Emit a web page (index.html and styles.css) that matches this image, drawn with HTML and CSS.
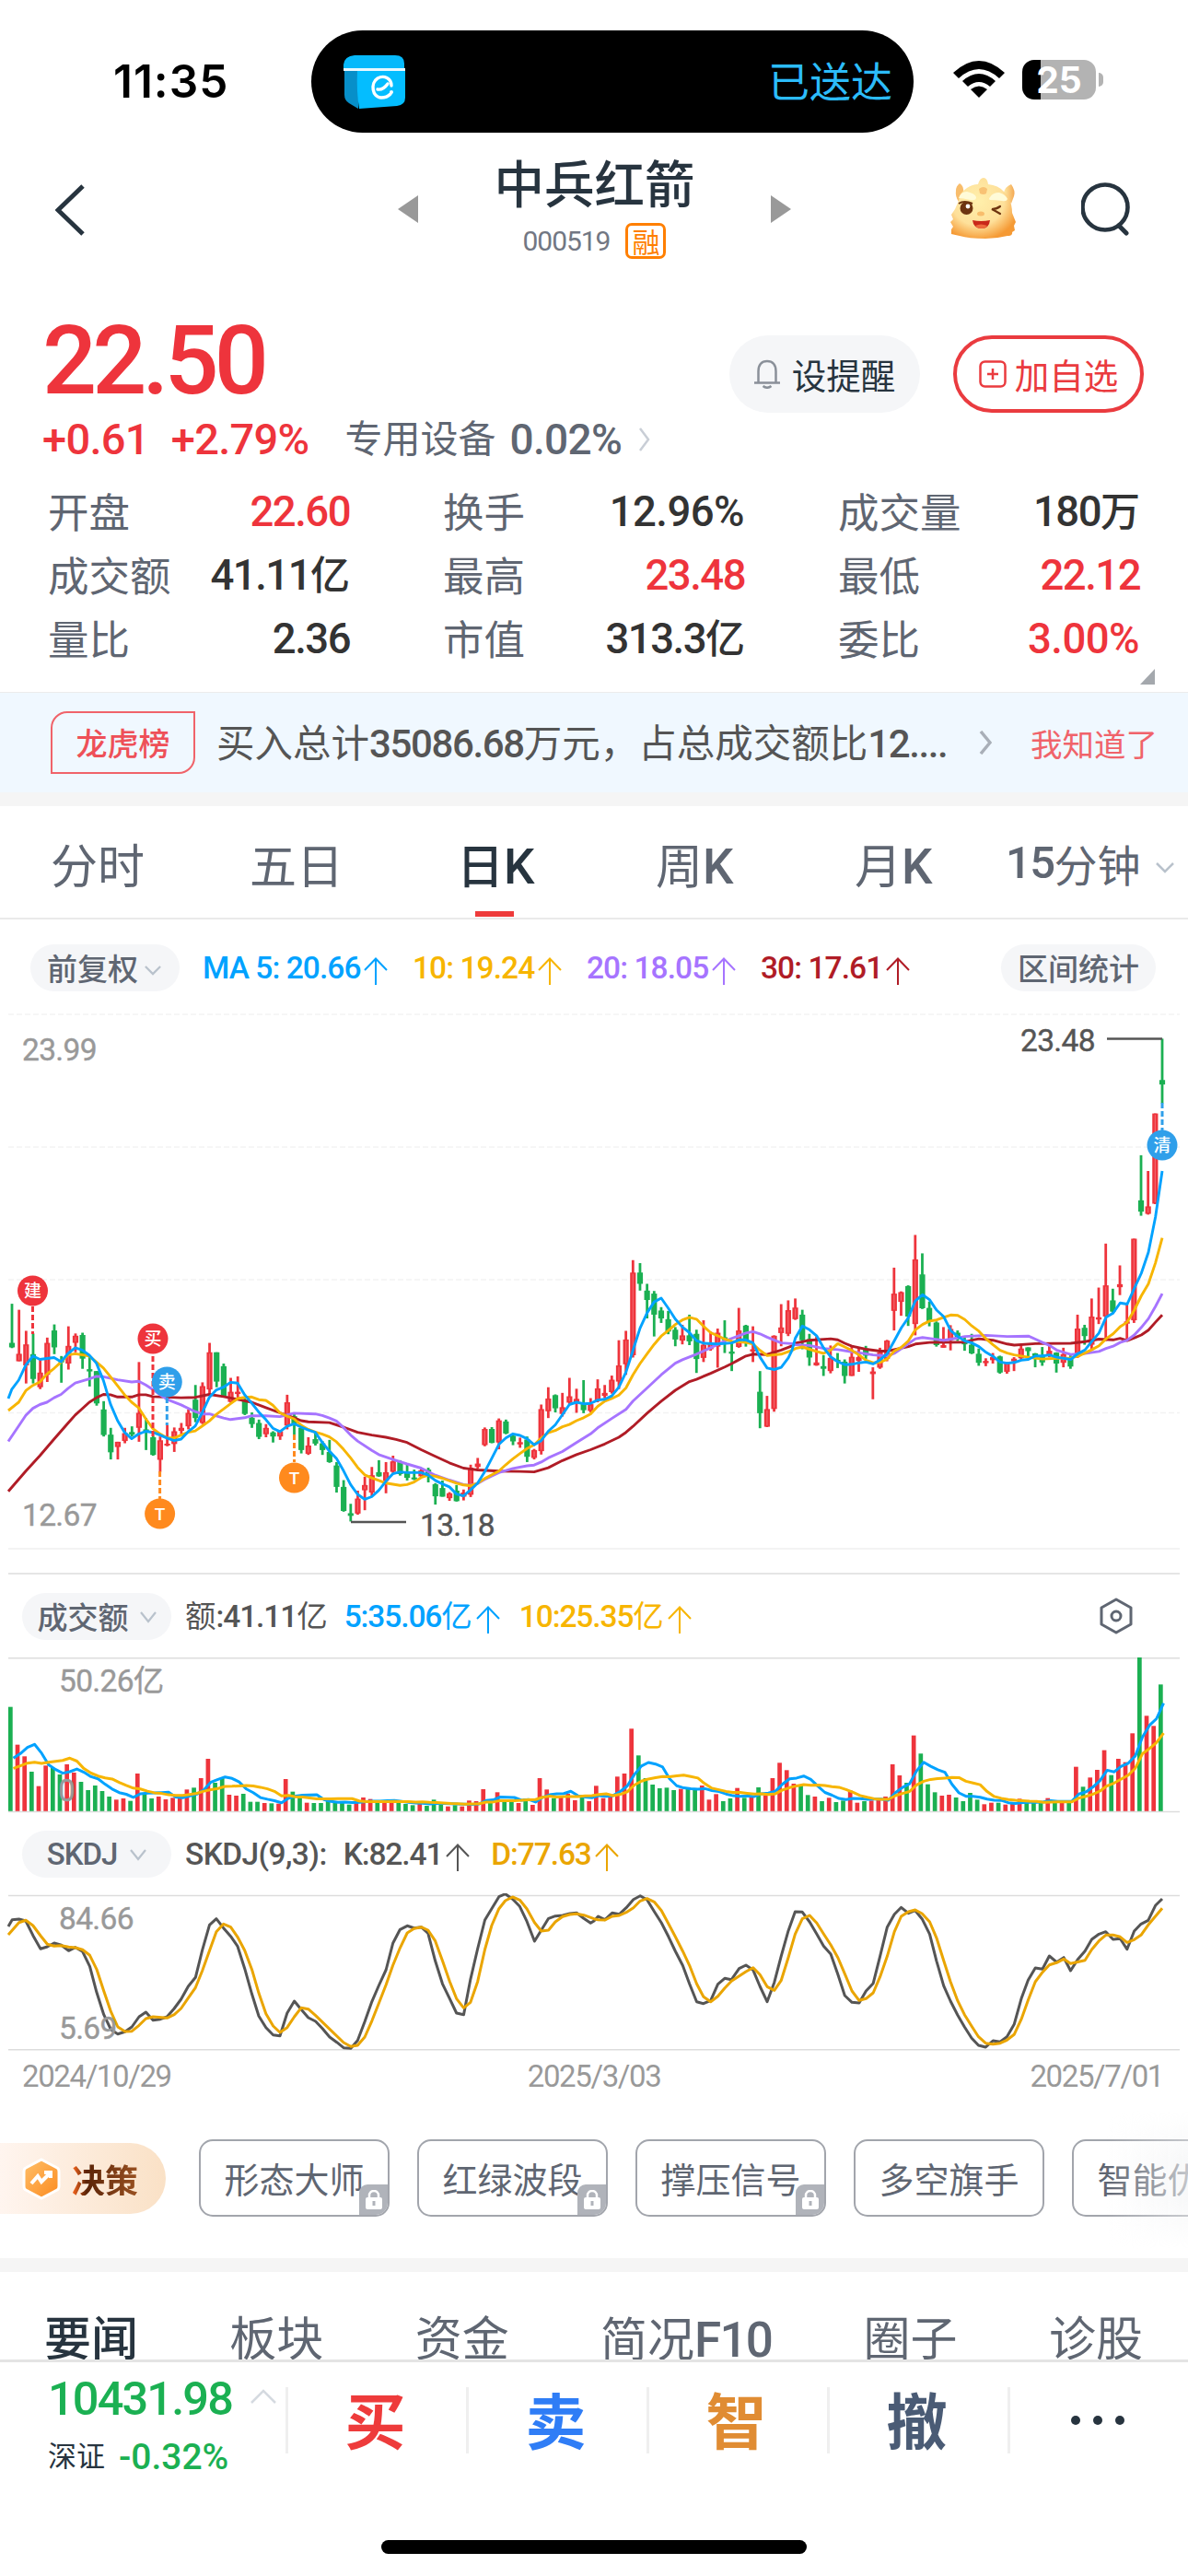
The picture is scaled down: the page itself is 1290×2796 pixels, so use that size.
FILE: index.html
```html
<!DOCTYPE html>
<html lang="zh-CN">
<head>
<meta charset="utf-8">
<title>中兵红箭 000519</title>
<link rel="stylesheet" href="styles.css">
</head>
<body>
<main class="phone">
  <header class="status">
    <span class="time">11:35</span>
    <div class="island">
      <svg class="wallet" width="68" height="58" viewBox="0 0 68 58">
        <path d="M12 0H56Q66 0 66 9V16H0V10Q1 1 12 0Z" fill="#06b9fb"/>
        <path d="M1 17L16 16V58L6 52Q1 49 1 43Z" fill="#078fc9"/>
        <path d="M15 16H67V46Q67 54 58 55L17 58Q14 40 15 16Z" fill="#04bdff"/>
        <path d="M0 14H67V17H0Z" fill="#e8f8ff"/>
        <path d="M52 33C52 25 44 21 37 25C29 30 31 46 41 46C45 46 48 45 51 42M37 37Q43 38 48 31" fill="none" stroke="#fff" stroke-width="3.400" stroke-linecap="round"/>
        <circle cx="52" cy="40" r="2" fill="#fff"/>
      </svg>
      <span class="sent">已送达</span>
    </div>
    <svg class="wifi" width="56" height="41" viewBox="0 0 56 41">
      <path d="M0 13Q28-13 56 13L50 19Q28-1 6 19Z"/>
      <path d="M10 22Q28 6 46 22L40 28Q28 18 16 28Z"/>
      <path d="M19 31Q28 24 37 31L28 40Z"/>
    </svg>
    <div class="battery"><span>25</span></div>
    <i class="battery-cap"></i>
  </header>

  <nav class="titlebar">
    <svg class="back" width="32" height="56" viewBox="0 0 32 56"><path d="M30 2L3 28L30 54" fill="none" stroke="#27343f" stroke-width="5"/></svg>
    <svg class="prev" width="22" height="30" viewBox="0 0 22 30"><path d="M22 0V30L0 15Z" fill="#999"/></svg>
    <div class="stock">
      <h1>中兵红箭</h1>
      <p><span class="n code">000519</span><span class="margin-tag">融</span></p>
    </div>
    <svg class="next" width="22" height="30" viewBox="0 0 22 30"><path d="M0 0V30L22 15Z" fill="#999"/></svg>
    <svg class="mascot" width="72" height="66" viewBox="0 0 72 66">
      <defs>
        <radialGradient id="face" cx=".42" cy=".38" r=".65"><stop offset="0" stop-color="#fff0ac"/><stop offset=".62" stop-color="#fee09a"/><stop offset="1" stop-color="#f59a35"/></radialGradient>
        <linearGradient id="horn" x2="1"><stop offset="0" stop-color="#ffeaa6"/><stop offset="1" stop-color="#f4a852"/></linearGradient>
      </defs>
      <path d="M10 6Q15 9 14 16L9 26Q5 20 6 14Q6 9 10 6Z" fill="#f8bd6c"/>
      <path d="M58 16Q59 10 66 7Q71 14 69 20L66 28Z" fill="url(#horn)"/>
      <path d="M9 25Q10 16 18 11Q24 7 30 7Q32 0 36 0Q40 0 41 7Q52 8 58 15Q64 20 66 29Q67 34 67 38L71 48L69 52L70 57L67 59Q68 63 62 63Q50 66 38 66Q20 66 10 63L1 61V56L3 53L0 48L3 45L1 40L5 34Z" fill="url(#face)"/>
      <path d="M31 12Q36 8 40 12L39 17Q36 19 32 17Z" fill="#f8c274"/>
      <path d="M9 22Q11 15 18 15Q27 17 28 21Q28 25 22 24Q13 22 9 22Z" fill="#fffbd8"/>
      <path d="M43 21Q46 16 53 16Q60 18 62 23Q61 26 56 25Q48 24 43 24Q41 23 43 21Z" fill="#fffbd8"/>
      <circle cx="17.500" cy="33" r="7" fill="#6d3410"/><path d="M9 28Q15 24 24 28" stroke="#6d3410" stroke-width="2" fill="none"/><circle cx="19" cy="31" r="2.400" fill="#fff"/>
      <path d="M54 31Q50 34 45 34Q49 36 54 39" fill="none" stroke="#6d3410" stroke-width="2.200" stroke-linecap="round"/>
      <ellipse cx="33" cy="39" rx="4" ry="2.500" fill="#f8bd6c"/>
      <path d="M24 46Q33 48 43 46Q42 55 34 55Q25 55 24 46Z" fill="#c9281a"/><path d="M27 52Q33 49 40 52Q38 55 34 55Q29 55 27 52Z" fill="#ee6a3c"/>
    </svg>
    <svg class="search" width="54" height="58" viewBox="0 0 54 58"><circle cx="26" cy="27" r="24.500" fill="none" stroke="#27343f" stroke-width="4.600"/><path d="M41 47L49 55" stroke="#27343f" stroke-width="5" stroke-linecap="round"/></svg>
  </nav>

  <section class="quote">
    <div class="quote-top">
      <div class="price n">22.50</div>
      <div class="actions">
        <button class="btn remind"><svg width="28" height="32" viewBox="0 0 28 32"><path d="M4.500 25V13C4.500 6 8 2 14 2S23.500 6 23.500 13V25M0 25.500H28M9.500 29Q14 32.500 18.500 29" fill="none" stroke="#8a9099" stroke-width="2.500"/></svg><span>设提醒</span></button>
        <button class="btn add"><svg width="30" height="30" viewBox="0 0 30 30"><rect x="1.500" y="1.500" width="27" height="27" rx="5" fill="none" stroke="#ea3b3f" stroke-width="2.500"/><path d="M15 9V21M9 15H21" stroke="#ea3b3f" stroke-width="2.500"/></svg><span>加自选</span></button>
      </div>
    </div>
    <div class="change">
      <b class="n">+0.61</b><b class="n pct">+2.79%</b>
      <span class="sector">专用设备</span><span class="n sector-pct">0.02%</span>
      <svg width="12" height="26" viewBox="0 0 12 26"><path d="M1 1L10 13L1 25" fill="none" stroke="#c9ced6" stroke-width="2.500"/></svg>
    </div>
    <dl class="stats">
      <div><dt>开盘</dt><dd class="up n">22.60</dd></div><div><dt>换手</dt><dd class="n wide">12.96%</dd></div><div><dt>成交量</dt><dd class="n">180<s>万</s></dd></div>
      <div><dt>成交额</dt><dd class="n">41.11<s>亿</s></dd></div><div><dt>最高</dt><dd class="up n">23.48</dd></div><div><dt>最低</dt><dd class="up n">22.12</dd></div>
      <div><dt>量比</dt><dd class="n">2.36</dd></div><div><dt>市值</dt><dd class="n">313.3<s>亿</s></dd></div><div><dt>委比</dt><dd class="up n wide">3.00%</dd></div>
    </dl>
    <i class="corner"></i>
  </section>

  <section class="notice">
    <span class="notice-tag">龙虎榜</span>
    <p>买入总计<span class="n">35086.68</span>万元，占总成交额比<span class="n">12....</span></p>
    <svg width="14" height="26" viewBox="0 0 14 26"><path d="M2 1L12 13L2 25" fill="none" stroke="#a9afb8" stroke-width="3.500"/></svg>
    <a>我知道了</a>
  </section>

  <nav class="periods">
    <span>分时</span><span class="five">五日</span><span class="on">日<em class="n">K</em></span><span>周<em class="n">K</em></span><span>月<em class="n">K</em></span>
    <span class="min"><em class="n">15</em>分钟<svg width="20" height="12" viewBox="0 0 20 12"><path d="M1 1L10 10L19 1" fill="none" stroke="#b9c2cc" stroke-width="2.500"/></svg></span>
  </nav>

  <div class="ma-row">
    <span class="pill adj">前复权<svg width="18" height="11" viewBox="0 0 20 12"><path d="M1 1L10 10L19 1" fill="none" stroke="#b9c2cc" stroke-width="2.500"/></svg></span>
    <span class="n ind m5">MA 5: 20.66<svg class="arr"><use href="#up"/></svg></span>
    <span class="n ind m10">10: 19.24<svg class="arr"><use href="#up"/></svg></span>
    <span class="n ind m20">20: 18.05<svg class="arr"><use href="#up"/></svg></span>
    <span class="n ind m30">30: 17.61<svg class="arr"><use href="#up"/></svg></span>
    <span class="pill range">区间统计</span>
  </div>

  <svg class="kline" id="kline" width="1290" height="629" viewBox="0 0 1290 629"></svg>

  <div class="sub-row vol-row">
    <span class="pill">成交额<svg width="18" height="13" viewBox="0 0 18 13"><path d="M1 1L9 11L17 1" fill="none" stroke="#b9c2cc" stroke-width="2.200"/></svg></span>
    <span class="n ind first"><s>额</s>:41.11<s>亿</s></span>
    <span class="n ind m5">5:35.06<s>亿</s><svg class="arr"><use href="#up"/></svg></span>
    <span class="n ind m10">10:25.35<s>亿</s><svg class="arr"><use href="#up"/></svg></span>
    <svg class="gear" width="38" height="40" viewBox="0 0 38 40"><path d="M19 2L35 11V29L19 38L3 29V11Z" fill="none" stroke="#5f6672" stroke-width="3" stroke-linejoin="round"/><circle cx="19" cy="20" r="5" fill="none" stroke="#5f6672" stroke-width="3"/></svg>
  </div>
  <svg class="volume" id="volume" width="1290" height="171" viewBox="0 0 1290 171"></svg>

  <div class="sub-row skdj-row">
    <span class="pill n">SKDJ<svg width="18" height="13" viewBox="0 0 18 13"><path d="M1 1L9 11L17 1" fill="none" stroke="#b9c2cc" stroke-width="2.200"/></svg></span>
    <span class="n ind first name">SKDJ(9,3):</span>
    <span class="n ind first">K:82.41<svg class="arr"><use href="#up"/></svg></span>
    <span class="n ind d">D:77.63<svg class="arr"><use href="#up"/></svg></span>
  </div>
  <svg class="skdj" id="skdj" width="1290" height="172" viewBox="0 0 1290 172"></svg>
  <div class="dates n"><span>2024/10/29</span><span class="mid">2025/3/03</span><span>2025/7/01</span></div>

  <section class="tools">
    <div class="decision">
      <svg width="42" height="46" viewBox="0 0 42 46"><defs><linearGradient id="hex" x2="1" y2="1"><stop offset="0" stop-color="#ffc06a"/><stop offset="1" stop-color="#fb8a1f"/></linearGradient></defs><path d="M21 2L38 11Q40 12 40 15V31Q40 34 38 35L21 44L4 35Q2 34 2 31V15Q2 12 4 11Z" fill="url(#hex)" stroke="#fff" stroke-width="3"/><path d="M10 28L17 20L21 26L31 16M24 16H31V22" fill="none" stroke="#fff" stroke-width="4"/></svg>
      <b>决策</b>
    </div>
    <div class="card">形态大师<i class="lock"><svg width="20" height="22" viewBox="0 0 20 22"><path d="M5 10V6A5 5 0 0 1 15 6V10" fill="none" stroke="#fff" stroke-width="2.500"/><rect x="1" y="8" width="18" height="13" rx="2" fill="#fff"/><path d="M10 12V17" stroke="#b0b3ba" stroke-width="3"/></svg></i></div>
    <div class="card">红绿波段<i class="lock"><svg width="20" height="22" viewBox="0 0 20 22"><path d="M5 10V6A5 5 0 0 1 15 6V10" fill="none" stroke="#fff" stroke-width="2.500"/><rect x="1" y="8" width="18" height="13" rx="2" fill="#fff"/><path d="M10 12V17" stroke="#b0b3ba" stroke-width="3"/></svg></i></div>
    <div class="card">撑压信号<i class="lock"><svg width="20" height="22" viewBox="0 0 20 22"><path d="M5 10V6A5 5 0 0 1 15 6V10" fill="none" stroke="#fff" stroke-width="2.500"/><rect x="1" y="8" width="18" height="13" rx="2" fill="#fff"/><path d="M10 12V17" stroke="#b0b3ba" stroke-width="3"/></svg></i></div>
    <div class="card">多空旗手</div>
    <div class="card">智能优选</div>
    <i class="fade"></i>
  </section>

  <nav class="topics"><span class="on">要闻</span><span>板块</span><span>资金</span><span>简况<em class="n">F10</em></span><span>圈子</span><span>诊股</span></nav>

  <footer class="trade">
    <div class="index">
      <div class="index-value"><span class="n">10431.98</span><svg width="28" height="16" viewBox="0 0 28 16"><path d="M1 15L14 2L27 15" fill="none" stroke="#d5dae0" stroke-width="2.500"/></svg></div>
      <div class="index-change"><span>深证</span><span class="n wide">-0.32%</span></div>
    </div>
    <div class="op buy">买</div><div class="op sell">卖</div><div class="op smart">智</div><div class="op cancel">撤</div>
    <div class="op more"><i></i><i></i><i></i></div>
  </footer>
  <i class="home"></i>
</main>
<svg width="0" height="0" class="defs"><symbol id="up" viewBox="0 0 26 30"><path d="M13 1V30M1 14L13 1.500L25 14" fill="none" stroke="currentColor" stroke-width="2"/></symbol></svg>
<script src="charts.js"></script>
</body>
</html>
```
FILE: styles.css
```css
* { box-sizing: border-box; }
body { margin: 0; background: #fff; font-family: Roboto, "Noto Sans CJK SC", sans-serif; color: #5f6672; }
h1, p, dl, dd { margin: 0; }
s { text-decoration: none; letter-spacing: 0; font-weight: 400; }
em, i { font-style: normal; }
svg { flex: none; }
.defs { position: absolute; }
.n { font-family: Roboto, "Noto Sans CJK SC", sans-serif; font-weight: 500; letter-spacing: -0.033em; }
.phone { width: 1290px; height: 2796px; overflow: hidden; display: flex; flex-direction: column; background: #fff; }
.phone > * { flex: none; }

.status { height: 144px; padding: 33px 0 0 123px; display: flex; align-items: center; color: #000; }
.time { width: 215px; font: 600 49.500px/1 Inter, sans-serif; letter-spacing: 1px; }
.island { width: 654px; height: 111px; border-radius: 56px; background: #000; display: flex; align-items: center; justify-content: space-between; padding: 0 23px 0 35px; }
.sent { font-size: 45px; line-height: 1; padding-top: 3px; color: #2cbcfa; }
.wifi { margin: 0 19px 4px 43px; }
.battery { width: 80px; height: 43px; border-radius: 13px; margin-bottom: 4px; background: linear-gradient(90deg, #000 0 20px, #b3b3b3 20px); color: #fff; font: 700 39px/43px Inter, sans-serif; text-align: center; }
.battery-cap { width: 5px; height: 15px; margin: 0 0 4px 3px; border-radius: 0 6px 6px 0; background: #b3b3b3; }

.titlebar { height: 172px; padding: 22px 62px 0 60px; display: flex; align-items: flex-start; }
.back { margin-top: 34px; }
.prev { margin: 46px 0 0 340px; }
.next { margin: 46px 0 0 0; }
.stock { width: 383px; text-align: center; }
.stock h1 { margin-top: -2px; font: 500 54.500px/66px "Noto Sans CJK SC", sans-serif; color: #27343f; }
.stock p { display: flex; justify-content: center; align-items: center; height: 40px; margin-top: 11px; }
.code { font-size: 30px; color: #727783; font-weight: 400; letter-spacing: -0.035em; }
.margin-tag { width: 44px; height: 39px; margin-left: 17px; border: 3px solid #ff7f00; border-radius: 7px; color: #ff7f00; font: 30px/33px "Noto Sans CJK SC", sans-serif; }
.mascot { margin: 27px 0 0 173px; }
.search { margin: 32px 0 0 auto; }

.quote { height: 435px; position: relative; }
.quote-top { height: 132px; padding: 26px 48px 0 46px; display: flex; align-items: center; justify-content: space-between; }
.price { font-size: 104px; line-height: 92px; margin-top: -6px; color: #ee343c; letter-spacing: -0.047em; }
.actions { display: flex; gap: 36px; margin-top: 21px; }
.btn { width: 207px; height: 84px; border-radius: 42px; border: 0; padding: 0; display: flex; justify-content: center; align-items: center; gap: 13px; font: 37.500px/1 "Noto Sans CJK SC", sans-serif; }
.remind { background: #f5f6f8; color: #27343f; }
.add { background: #fff; border: 4px solid #ea3b3f; color: #ea3b3f; gap: 9px; }
.change { height: 60px; padding: 0 0 3px 46px; display: flex; align-items: center; color: #ee343c; font-size: 47px; }
.change .n { letter-spacing: -0.015em; }
.change .pct { margin-left: 24px; }
.sector { margin-left: 39px; font-size: 41px; line-height: 50px; color: #5f6672; }
.sector-pct { margin-left: 15px; font-size: 46px; color: #5f6672; }
.change svg { margin-left: 19px; }
.stats { padding: 11px 54px 0 52px; display: grid; grid-template-columns: repeat(3, 327px); column-gap: 102px; grid-auto-rows: 69px; }
.stats div { display: flex; justify-content: space-between; align-items: center; }
.stats dt { font: 44.500px/60px "Noto Sans CJK SC", sans-serif; }
.stats dd { font-size: 45.500px; line-height: 60px; padding-top: 4px; margin-right: -1px; color: #333; white-space: nowrap; }
.stats .wide { letter-spacing: -0.012em; margin-right: 0; }
.stats s { font-size: 43px; font-weight: 500; }
.stats .up { color: #ee343c; }
.corner { position: absolute; right: 36px; bottom: 8px; width: 16px; height: 17px; background: #a4a8ad; clip-path: polygon(100% 0, 100% 100%, 0 100%); }

.notice { height: 124px; border-bottom: 15px solid #f5f5f5; border-top: 1px solid #ececec; background: #f0f8ff; display: flex; align-items: center; padding-left: 55px; color: #555; }
.notice-tag { width: 157px; height: 68px; border: 2px solid #f0636a; border-radius: 18px 0 18px 0; color: #ee5058; font: 500 34px/64px "Noto Sans CJK SC", sans-serif; text-align: center; }
.notice p { width: 792px; margin-left: 23px; padding-top: 3px; font-size: 41.500px; line-height: 60px; white-space: nowrap; }
.notice p .n { font-size: 42px; }
.notice svg { margin: 0 42px 0 36px; }
.notice a { font-size: 34.500px; color: #f0636a; white-space: nowrap; }

.periods { height: 123px; border-bottom: 2px solid #eaeaea; display: flex; align-items: center; font-size: 51px; padding: 2px 0 0 55px; }
.periods span { width: 216px; }
.periods .five { width: 225px; }
.periods .on { position: relative; color: #27343f; font-weight: 500; }
.periods .on::after { content: ""; position: absolute; left: 20px; top: 89px; width: 42px; height: 6px; background: #ee3b3b; }
.periods .min { width: auto; font-size: 47px; display: flex; align-items: center; white-space: nowrap; margin-left: -52px; }
.periods .min svg { margin: 10px 0 0 17px; }
.periods .n { font-size: 53px; }
.periods .min .n { font-size: 49px; }

.pill { height: 51px; border-radius: 26px; background: #f5f6f8; color: #5f6672; display: flex; align-items: center; justify-content: center; font: 500 33px/51px "Noto Sans CJK SC", sans-serif; }
.ind { display: flex; align-items: center; font-size: 33.500px; line-height: 40px; white-space: nowrap; }
.arr { width: 26px; height: 30px; margin: 6px 0 0 4px; }
.m5 { color: #00a2ff; } .m10 { color: #f7b500; } .m20 { color: #a674ff; } .m30 { color: #b01c26; }
.ma-row { height: 82px; padding: 22px 35px 0 33px; display: flex; align-items: center; }
.ma-row .pill svg { margin: 6px 0 0 7px; }
.ma-row .adj { width: 162px; margin-right: 25px; padding-right: 2px; }
.ma-row .m5 { width: 228px; } .ma-row .m10, .ma-row .m20 { width: 189px; }
.ma-row .n { letter-spacing: -0.028em; padding-top: 1px; }
.range { width: 168px; margin-left: auto; }
.kline, .volume, .skdj { display: block; }

.sub-row { height: 90px; padding: 0 59px 0 24px; display: flex; align-items: center; }
.sub-row .pill { width: 162px; margin-right: 15px; gap: 12px; }
.sub-row .pill svg { margin-top: 2px; }
.sub-row .first { color: #555; margin-right: 18px; }
.sub-row .m5 { margin-right: 21px; }
.sub-row .d { color: #eaa500; }
.vol-row .ind { padding-top: 2px; }
.gear { margin-left: auto; }
.skdj-row { height: 85px; }
.skdj-row .first { margin-right: 23px; }
.skdj-row .name { letter-spacing: -0.018em; margin-right: 18px; }
.skdj-row .pill.n { font-family: Roboto, sans-serif; font-size: 33px; gap: 14px; }
.dates { height: 59px; padding: 1px 27px 0 24px; display: flex; justify-content: space-between; font-size: 33px; line-height: 52px; color: #999; letter-spacing: -0.042em; font-weight: 400; }
.dates .mid { margin-right: 14px; }

.tools { height: 180px; border-bottom: 15px solid #f5f5f5; padding-top: 36px; display: flex; position: relative; overflow: hidden; }
.decision { width: 180px; height: 77px; margin: 4px 36px 0 0; flex: none; border-radius: 0 39px 39px 0; background: linear-gradient(90deg, #fff5ef, #fae1c6); display: flex; align-items: center; padding-left: 24px; gap: 12px; }
.decision b { font: 700 36px/1 "Noto Sans CJK SC", sans-serif; color: transparent; background: linear-gradient(90deg, #ff6a1f, #5b2408 22%, #9a5222); background-clip: text; }
.card { width: 207px; height: 84px; flex: none; margin-right: 30px; border: 2px solid #a2a5ac; border-radius: 15px; font: 38px/80px "Noto Sans CJK SC", sans-serif; text-align: center; position: relative; overflow: hidden; white-space: nowrap; }
.lock { position: absolute; right: 0; bottom: 0; width: 31px; height: 33px; background: #b0b3ba; border-radius: 9px 0 0 0; display: flex; align-items: center; justify-content: center; }
.fade { position: absolute; right: 0; top: 5px; width: 88px; height: 150px; background: linear-gradient(90deg, #fff0, #f4f5f6aa); -webkit-mask: linear-gradient(#0000, #000 35%, #000 65%, #0000); }

.topics { height: 95px; overflow: hidden; padding: 37px 49px 0 48px; display: flex; justify-content: space-between; font-size: 51px; line-height: 74px; white-space: nowrap; }
.topics .on { color: #27343f; font-weight: 500; }
.topics .n { font-size: 53px; }

.trade { height: 196px; border-top: 3px solid #e4e4e4; display: flex; background: #fff; }
.index { width: 310px; padding: 12px 0 0 52px; color: #1bb052; }
.index-value { display: flex; font-size: 50.500px; line-height: 56px; }
.index-value .n { width: 220px; letter-spacing: -0.037em; }
.index-value svg { margin-top: 17px; }
.index-change { display: flex; gap: 15px; margin-top: 7px; font-size: 39px; line-height: 56px; }
.index-change .wide { letter-spacing: 0; }
.index-change span:first-child { font-size: 31px; color: #27343f; }
.op { width: 196px; height: 72px; margin-top: 27px; padding: 0 4px 7px 0; border-left: 3px solid #efefef; display: flex; align-items: center; justify-content: center; font: 700 66px/72px "Noto Sans CJK SC", sans-serif; }
.buy { color: #ee3b3b; } .sell { color: #2f7df6; } .smart { color: #e08c33; } .cancel { color: #4a5b75; }
.more { gap: 14px; padding-bottom: 0; }
.more i { width: 10px; height: 10px; border-radius: 50%; background: #27343f; }
.home { width: 462px; height: 15px; border-radius: 8px; background: #000; margin: 0 auto; }

.axis { font: 400 33.500px Roboto, "Noto Sans CJK SC", sans-serif; letter-spacing: -0.02em; fill: #999; stroke: #999; stroke-width: .4px; }
.axis.dark { fill: #555; stroke: #555; }
.badge { font: 500 19px Roboto, "Noto Sans CJK SC", sans-serif; fill: #fff; text-anchor: middle; }
```
FILE: charts.js
```js
// Candles: direction, high, body top, body bottom, low (chart units, 2.45 per px)
const candles = `g821,925,937,939 r837,954,974,974 r893,929,985,1033 g900,955,1021,1033 r970,1004,1043,1048 r911,925,1010,1029 g876,892,937,955 g960,972,974,1031 r881,933,980,996 r900,906,925,950 g898,904,967,994 g960,995,1001,1041 g1000,1000,1086,1092 g1080,1102,1170,1174 g1151,1169,1216,1235 r1188,1188,1202,1235 r1151,1165,1186,1192 g1147,1162,1169,1174 r976,1111,1151,1188 g1125,1155,1160,1210 g1172,1176,1223,1225 r1174,1184,1236,1268 r1143,1193,1198,1200 r1150,1160,1194,1215 r1138,1151,1159,1168 r1102,1111,1147,1155 g1037,1076,1125,1136 r1030,1040,1138,1141 r925,950,1049,1060 g950,950,1028,1043 g980,987,1068,1070 r1018,1055,1082,1084 r1014,1055,1061,1075 g1072,1076,1114,1117 g1110,1124,1141,1151 g1129,1138,1175,1181 r1141,1151,1168,1176 g1160,1163,1174,1190 r1157,1160,1174,1183 r1063,1083,1145,1155 g1114,1120,1140,1170 g1147,1151,1210,1219 r1176,1198,1220,1223 g1166,1181,1193,1198 g1186,1192,1210,1223 g1183,1215,1242,1244 g1242,1251,1308,1323 g1290,1308,1372,1374 g1353,1378,1385,1400 r1318,1339,1379,1382 r1281,1303,1317,1370 r1255,1277,1323,1333 g1237,1269,1280,1281 r1242,1269,1292,1325 r1225,1240,1268,1271
g1237,1241,1274,1278 g1247,1270,1284,1291 g1262,1283,1288,1290 r1258,1264,1280,1283 g1257,1262,1272,1296 g1298,1301,1333,1355 g1291,1311,1334,1334 r1322,1325,1338,1345 g1303,1318,1346,1347 r1315,1323,1334,1344 r1249,1257,1329,1335 r1231,1246,1255,1260 r1150,1154,1197,1200 g1149,1154,1191,1192 r1126,1131,1190,1208 g1129,1134,1166,1168 g1166,1172,1187,1197 r1177,1189,1195,1204 g1174,1182,1228,1242 r1207,1210,1231,1235 r1089,1101,1213,1222 r1043,1073,1107,1125 g1062,1064,1099,1110 r1058,1096,1114,1121 r1018,1067,1084,1090 r1047,1074,1084,1111 g1024,1088,1104,1112 r1072,1088,1106,1110 r1022,1046,1078,1083 r1037,1058,1066,1072 r1012,1023,1056,1060 r918,985,1028,1048 r893,916,982,1010 r705,738,958,964 g713,738,768,786 g768,786,811,860 g787,794,850,908 g830,839,860,872 g840,862,895,902 g883,890,916,934 r877,905,919,929 g850,905,921,931 g890,901,968,1005 r865,930,965,976 r895,925,942,946 r887,898,935,991 g865,910,918,952 g925,948,954,1000 r832,892,936,938 g877,879,924,935 r881,942,948,976 g1000,1055,1112,1152 r1066,1101,1148,1149 r905,906,1101,1108 r822,884,899,934 r812,838,901,907
r807,831,862,864 g837,850,918,942 g901,915,964,986 r908,977,985,986 g958,987,994,1013 r932,965,1000,1006 g952,970,975,992 g969,975,1013,1033 r935,962,1013,1013 r940,963,973,1002 g933,940,959,968 r990,1001,1008,1075 r938,950,991,994 r917,919,968,974 r725,794,840,892 r788,790,816,853 g772,774,855,880 r638,703,875,905 g687,743,833,835 g815,832,868,881 g868,871,931,935 r883,931,938,938 r878,888,918,945 g892,898,915,920 g910,920,929,946 g901,930,953,955 g940,954,978,986 r966,973,979,987 r952,963,971,980 g959,961,1004,1007 r976,978,1002,1007 r963,967,974,1000 r930,940,966,970 g937,937,947,962 g952,953,968,990 g936,960,977,986 r928,946,956,963 g950,951,980,1004 r938,955,978,990 g958,963,988,994 r850,887,962,965 g877,885,907,930 r807,855,930,943 r778,857,863,875 r661,772,855,920 g781,812,842,848 r719,769,777,798 r820,868,874,918 r648,648,865,872 g426,546,576,587 r468,562,582,584 r315,315,555,556 g116,226,238,288`
  .split(/\s+/).map(c => [c[0], ...c.slice(1).split(',').map(Number)]);

// Moving averages: three panels of 1290 units each, x,y pairs
const averages = {
  '#b01c26': ['27,1320 84,1266 130,1225 176,1181 222,1138 245,1117 268,1100 291,1083 314,1071 337,1062 360,1063 383,1069 429,1069 452,1063 475,1063 498,1068 590,1071 636,1070 682,1062 728,1068 774,1075 820,1083 866,1097 912,1111 958,1124 981,1132 1004,1135 1073,1137 1119,1149 1165,1163 1211,1170 1257,1176 1290,1182',
    '36,1190 82,1209 128,1227 174,1244 220,1258 266,1263 335,1266 404,1267 450,1268 496,1257 542,1238 588,1222 634,1209 680,1194 726,1176 749,1163 772,1147 818,1112 864,1080 910,1051 956,1028 979,1022 1025,1006 1071,989 1094,980 1117,970 1140,960 1163,955 1209,956 1255,944 1290,933',
    '11,926 57,918 126,914 149,917 172,926 195,934 241,942 287,947 310,947 333,943 379,935 402,928 448,924 563,923 586,918 609,914 655,918 701,928 724,931 793,927 908,926 954,922 1000,915 1046,917 1069,913 1092,919 1115,912 1138,904 1161,891 1184,870 1206,851'],
  '#a674ff': ['27,1187 61,1146 84,1118 107,1099 130,1089 153,1083 176,1071 199,1062 222,1046 245,1032 291,1021 314,1014 337,1015 383,1023 429,1029 452,1027 475,1037 498,1049 521,1063 544,1075 590,1090 636,1108 659,1114 682,1114 728,1125 751,1129 797,1124 820,1119 866,1119 912,1121 958,1112 1027,1114 1050,1118 1073,1125 1096,1133 1119,1150 1142,1170 1165,1186 1211,1211 1234,1222 1280,1235',
    '36,1247 82,1258 128,1277 174,1290 220,1302 243,1304 266,1299 289,1288 335,1270 381,1259 427,1252 450,1250 473,1242 496,1231 542,1214 588,1190 634,1167 657,1151 703,1126 749,1102 772,1080 818,1045 864,1010 910,979 933,970 979,955 1025,938 1071,920 1117,906 1140,899 1163,895 1186,901 1209,910 1255,925 1290,927',
    '11,930 57,932 103,940 149,943 195,949 241,954 264,957 310,960 333,953 356,940 402,914 425,911 494,918 540,912 563,908 632,905 701,908 770,907 793,915 816,924 839,932 862,944 885,950 908,956 954,953 1000,948 1023,940 1046,934 1069,924 1092,918 1115,904 1138,884 1161,861 1184,828 1206,794'],
  '#f7b500': ['27,1105 61,1083 84,1052 107,1038 130,1029 153,1008 176,993 199,976 222,957 245,954 291,960 314,976 337,992 360,1015 383,1039 406,1063 429,1083 452,1098 475,1127 498,1153 521,1167 544,1178 567,1178 590,1170 613,1163 636,1159 659,1146 682,1133 705,1115 728,1101 751,1087 774,1073 797,1070 820,1069 843,1076 866,1078 889,1091 912,1111 935,1120 958,1127 981,1144 1004,1155 1027,1162 1050,1168 1073,1175 1096,1188 1119,1208 1142,1231 1165,1256 1188,1276 1211,1284 1234,1291 1257,1298 1280,1301',
    '13,1304 36,1302 59,1295 82,1283 105,1277 128,1280 151,1285 197,1298 220,1303 243,1305 266,1298 289,1286 312,1276 335,1266 358,1249 381,1233 404,1219 427,1206 450,1196 473,1178 496,1164 519,1158 542,1148 565,1142 588,1132 611,1124 634,1114 657,1094 680,1080 703,1073 726,1064 749,1045 772,1010 795,980 818,954 841,929 864,907 887,892 910,876 933,864 956,857 979,862 1002,881 1025,898 1048,906 1071,915 1094,921 1140,924 1163,928 1186,945 1209,959 1255,955 1290,945',
    '11,940 34,936 57,942 80,948 103,953 126,944 149,927 172,936 195,945 218,957 241,971 264,978 287,977 310,968 333,947 356,937 379,920 402,890 425,876 448,867 471,864 494,857 517,851 540,852 563,863 586,880 609,894 632,914 655,930 678,945 701,952 724,957 770,963 816,968 862,966 908,965 931,961 954,952 977,943 1000,933 1023,914 1046,901 1069,882 1092,870 1115,838 1138,800 1161,768 1184,712 1206,646'],
  '#00a2ff': ['27,1073 38,1049 61,1024 84,984 107,960 130,969 176,964 199,975 222,953 245,938 268,944 291,958 314,979 337,1025 360,1088 383,1132 406,1163 429,1180 452,1167 475,1160 498,1163 521,1170 544,1178 567,1185 590,1181 613,1161 636,1146 659,1110 682,1070 705,1050 728,1043 751,1030 774,1032 797,1063 820,1085 843,1109 866,1129 889,1152 912,1161 935,1147 958,1140 981,1149 1004,1157 1027,1163 1050,1190 1073,1213 1096,1232 1119,1265 1142,1302 1165,1328 1188,1341 1211,1334 1234,1317 1257,1293 1280,1273',
    '13,1268 36,1270 82,1270 105,1277 128,1291 151,1300 174,1308 197,1327 220,1332 243,1316 266,1298 289,1268 312,1232 335,1195 358,1178 381,1167 404,1171 427,1180 450,1196 473,1185 496,1160 519,1143 542,1116 565,1089 588,1083 611,1087 634,1086 657,1077 680,1075 703,1066 726,1043 749,1003 772,945 795,886 818,845 841,816 864,806 887,833 910,862 933,883 956,898 979,919 1002,926 1048,928 1094,925 1117,917 1140,917 1163,925 1186,963 1209,992 1232,996 1255,990 1278,965 1290,945',
    '11,912 34,880 57,890 80,906 103,938 126,962 149,975 172,983 195,982 218,978 241,976 264,981 287,970 310,954 333,920 356,885 379,858 402,813 425,797 448,810 471,838 494,855 517,892 540,908 563,920 586,925 609,935 632,950 655,961 678,976 701,979 724,977 747,971 770,969 793,960 816,960 839,957 862,963 908,969 931,954 954,944 977,921 1000,899 1023,857 1046,846 1069,819 1092,822 1115,780 1138,740 1161,684 1184,590 1206,468']
};

const color = { r: '#ee343c', g: '#1bb052' };
const step = 1249 / 163;
const line = (pts, c, w) => `<polyline points="${pts}" fill="none" stroke="${c}" stroke-width="${w}" stroke-linejoin="round"/>`;
const rule = (y, c, w, dash = '') => `<path d="M9 ${y}H1281" stroke="${c}" stroke-width="${w}" stroke-dasharray="${dash}"/>`;
const panels = (parts, width, sx, sy, dy) => parts.map((p, i) => p.split(' ').map(q => {
  const [x, y] = q.split(',').map(Number);
  return ((x + i * width) / sx).toFixed(1) + ',' + (y / sy - dy).toFixed(1);
}).join(' ')).join(' ');

// Price chart
let k = [21, 165, 309, 453.5].map(y => rule(y, '#f3f3f3', 1.5, '6 3')).join('') + rule(601, '#f3f3f3', 2);
candles.forEach(([d, h, t, b, l], i) => {
  const x = 13 + i * step, Y = v => v / 2.45;
  k += `<path d="M${x} ${Y(h)}V${Y(l)}" stroke="${color[d]}" stroke-width="2.8"/><rect x="${x - 3.1}" y="${Y(t)}" width="6.2" height="${Math.max(2, Y(b - t))}" fill="${color[d]}"/>`;
  if (d === 'r' && b - t > 12) k += `<rect x="${x - 0.6}" y="${Y(t) + 1.5}" width="1.2" height="${Y(b - t) - 3}" fill="#f3656c"/>`;
});
for (const c in averages) k += line(panels(averages[c], 1290, 3, 2.45, 0), c, 2.9);
const mark = (x, y, from, to, c, s) => `<path d="M${x} ${from}V${to}" stroke="${c}" stroke-width="3" stroke-dasharray="6 3"/><circle cx="${x}" cy="${y}" r="16.500" fill="${c}"/><text class="badge" x="${x}" y="${y + 7}">${s}</text>`;
k += mark(35.5, 321, 338, 368, '#ee343c', '建') + mark(166, 373, 392, 480, '#ee343c', '买') + mark(181.3, 420, 437, 467, '#2f9fea', '卖')
  + mark(173.6, 563, 517, 547, '#ff8a1e', 'T') + mark(319.5, 524, 477, 507, '#ff8a1e', 'T') + mark(1262, 163, 117, 147, '#2f9fea', '清');
k += `<path d="M1202 47.500H1262M381 572H441" stroke="#555" stroke-width="2.4"/>
<text class="axis" x="24" y="71">23.99</text><text class="axis" x="24" y="576">12.67</text>
<text class="axis dark" x="1108" y="61">23.48</text><text class="axis dark" x="456" y="587">13.18</text>`;
k += rule(628, '#ddd', 1.6);
document.getElementById('kline').innerHTML = k;

// Turnover bars (3 units per px) with 5 and 10 day averages
const vol = [488,611,649,699,746,679,687,708,675,702,732,759,744,762,780,790,786,794,705,770,786,780,789,784,780,757,751,720,657,735,718,774,777,771,797,797,801,802,803,723,764,784,800,801,801,794,797,798,806,800,783,788,797,798,798,797,804,808,802,810,790,802,812,808,812,793,795,756,798,766,797,798,801,786,807,720,757,785,781,771,792,780,795,
745,785,778,715,705,559,646,720,741,753,751,759,755,756,757,744,790,772,795,786,752,784,782,750,776,720,670,694,738,744,775,780,795,784,798,793,760,800,795,793,792,780,675,711,735,581,640,740,766,777,774,783,795,768,790,805,800,800,806,803,787,797,800,800,785,797,798,797,683,748,718,693,629,710,657,668,574,324,517,550,415];
const VY = v => v / 3 - 109;
let v = rule(0.8, '#ddd', 1.6);
vol.forEach((t, i) => { v += `<rect x="${9 + i * step}" y="${VY(t)}" width="4.700" height="${167 - VY(t)}" fill="${color[candles[i][0]]}"/>`; });
const mean = (n, lead) => vol.map((_, i) => {
  const m = i < lead.length ? lead[i] : vol.slice(i - n + 1, i + 1).reduce((a, b) => a + b) / n;
  return (14.5 + i * step).toFixed(1) + ',' + VY(m).toFixed(1);
}).join(' ');
v += line(mean(5, [655, 640, 620, 610]), '#00a2ff', 3) + line(mean(10, [688, 680, 671, 668, 672, 668, 665, 662, 655]), '#f7b500', 3);
v += rule(167.5, '#ddd', 1.6) + '<text class="axis" x="64" y="37">50.26亿</text><text class="axis" x="63" y="156">0</text>';
document.getElementById('volume').innerHTML = v;

// SKDJ oscillator
const K = ['22,333 32,311 50,309 68,315 87,362 107,406 125,399 143,387 162,394 181,412 199,401 218,415 237,463 255,547 274,620 293,669 311,683 330,676 348,660 367,627 385,612 404,638 423,635 441,627 460,600 478,570 497,528 516,499 534,410 553,328 571,308 590,338 609,365 627,397 646,470 665,553 683,625 702,662 721,686 739,689 758,615 777,576 795,603 814,630 833,642 851,665 870,693 889,710 907,728 926,730 944,704 963,643 982,577 1000,525 1019,474 1037,388 1056,343 1075,331 1093,338 1112,335 1130,355 1149,445 1168,520 1187,568 1205,615 1224,620 1242,505 1261,405 1280,312 1298,275 1317,236 1334,227 1353,244 1372,268 1391,317 1411,381 1429,345 1448,307 1466,299 1485,297 1504,291 1522,289 1541,307 1559,322 1568,315',
  '11,300 29,311 48,289 67,293 85,272 104,245 122,233 140,246 159,284 178,321 197,367 215,414 234,460 252,520 271,578 289,584 308,574 327,521 345,502 363,506 383,470 401,459 420,475 438,528 457,578 476,515 494,430 513,347 531,285 550,286 569,318 588,358 606,397 625,423 644,490 662,558 681,580 700,582 718,543 737,518 755,430 774,335 793,293 811,271 830,290 848,281 866,308 886,358 904,445 923,526 941,576 960,622 978,660 997,697 1015,720 1034,726 1053,705 1072,709 1090,692 1109,652 1128,568 1146,508 1165,468 1184,472 1202,429 1221,449 1240,434 1258,477 1277,440 1296,413 1314,375 1333,358 1351,350 1370,375 1389,373 1407,407 1426,348 1444,325 1463,313 1482,265 1500,243'];
const D = ['22,360 50,320 68,313 87,330 107,363 125,391 143,397 162,395 181,400 199,402 218,409 237,427 255,472 274,543 293,611 311,660 330,675 348,674 367,655 385,633 404,627 441,631 460,620 478,600 497,566 516,532 534,477 553,412 571,350 590,325 609,335 627,367 646,411 665,473 683,550 702,617 721,657 739,678 758,662 777,627 795,598 814,602 833,623 870,667 907,711 926,724 944,720 963,693 982,640 1000,583 1019,523 1037,460 1056,403 1075,354 1093,340 1112,335 1130,345 1149,380 1168,445 1187,512 1205,568 1224,598 1242,580 1261,512 1280,408 1298,330 1317,275 1334,249 1353,237 1372,247 1391,276 1411,320 1429,348 1448,345 1466,318 1485,301 1504,294 1522,292 1541,296 1568,308',
  '11,311 29,312 48,300 67,297 85,287 104,272 122,250 140,242 159,253 178,281 197,325 215,367 234,413 252,460 271,520 289,562 308,578 327,560 345,534 363,511 401,480 420,467 438,490 457,529 476,541 494,509 513,434 531,358 550,308 569,297 588,322 606,357 625,393 644,435 662,487 681,543 700,574 718,568 737,549 755,497 774,430 793,350 811,300 830,285 848,279 866,291 886,318 904,370 923,444 941,513 960,575 978,620 997,658 1015,692 1034,713 1053,716 1072,713 1090,703 1109,685 1128,635 1146,573 1165,513 1184,482 1202,458 1221,451 1240,439 1258,454 1296,443 1314,408 1333,380 1351,361 1370,361 1389,367 1407,385 1426,376 1444,361 1463,328 1482,300 1500,274'];
document.getElementById('skdj').innerHTML = rule(2.5, '#ddd', 1.6) + rule(169.7, '#ddd', 1.6)
  + line(panels(K, 1568, 2.431, 3, 75), '#555', 3) + line(panels(D, 1568, 2.431, 3, 75), '#eaa500', 3)
  + '<text class="axis" x="64" y="39">84.66</text><text class="axis" x="64" y="158">5.69</text>';
```
